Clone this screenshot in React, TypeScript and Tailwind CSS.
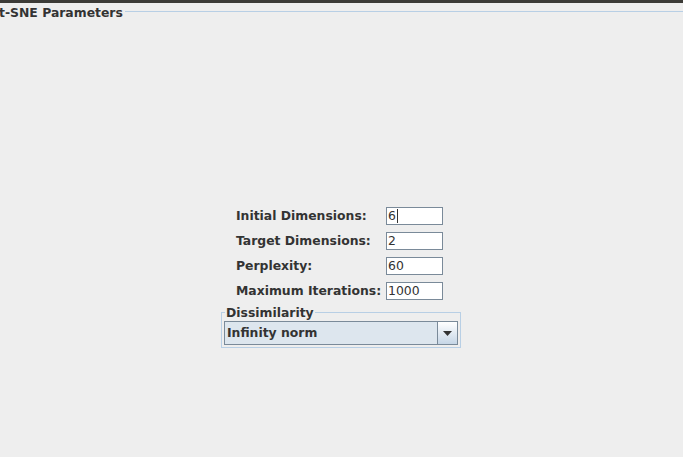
import React from "react";

const ROWS = [
  { label: "Initial Dimensions:", value: "6", caret: true },
  { label: "Target Dimensions:", value: "2" },
  { label: "Perplexity:", value: "60" },
  { label: "Maximum Iterations:", value: "1000" },
];

export default function App() {
  return (
    <div
      className="w-[683px] h-[457px] overflow-hidden bg-[#eeeeee] text-[#333333]"
      style={{ fontFamily: '"DejaVu Sans", sans-serif' }}
    >
      <div className="h-[3px] bg-[#3c3b37]" />

      {/* titled border */}
      <div className="flex items-start h-[17px] mt-[1px]">
        <span className="text-[12.4px] font-bold leading-[17px] -ml-[1px] pr-[2px] whitespace-nowrap">t-SNE Parameters</span>
        <div className="flex-1 h-px mt-[7px] bg-[#b8cfe5]" />
      </div>

      <div className="ml-[221px] mt-[186px] w-[240px]">
        <div className="pl-[15px] flex flex-col gap-[7px]">
          {ROWS.map((r) => (
            <div key={r.label} className="flex items-center h-[18px]">
              <span className="w-[150px] text-[12.4px] font-bold whitespace-nowrap pt-[1px]">{r.label}</span>
              <div className="w-[57px] h-[18px] bg-white border border-[#7a8a99] flex items-center px-[1px] text-[12.4px]">
                {r.value}
                {r.caret && <span className="w-px h-[14px] bg-[#333333] ml-[1px]" />}
              </div>
            </div>
          ))}
        </div>

        {/* Dissimilarity group */}
        <div className="relative mt-[12px] border border-[#b8cfe5] h-[36px]">
          <span className="absolute -top-[6px] left-[3px] bg-[#eeeeee] px-[1px] text-[12.4px] font-bold leading-none">
            Dissimilarity
          </span>
          <div className="absolute left-[2px] right-[2px] top-[8px] h-[24px] flex border border-[#7a8a99] bg-[#dde6ee]">
            <div className="flex-1 flex items-center pl-[2px] pt-[1px] text-[12.4px] font-bold border-r border-[#7a8a99]">
              Infinity norm
            </div>
            <div className="w-[19px] flex items-center justify-center bg-gradient-to-b from-[#ffffff] to-[#c6d6e6]">
              <svg width="9" height="5" viewBox="0 0 9 5">
                <path d="M0 0H9L4.5 5Z" fill="#333333" />
              </svg>
            </div>
          </div>
        </div>
      </div>
    </div>
  );
}
